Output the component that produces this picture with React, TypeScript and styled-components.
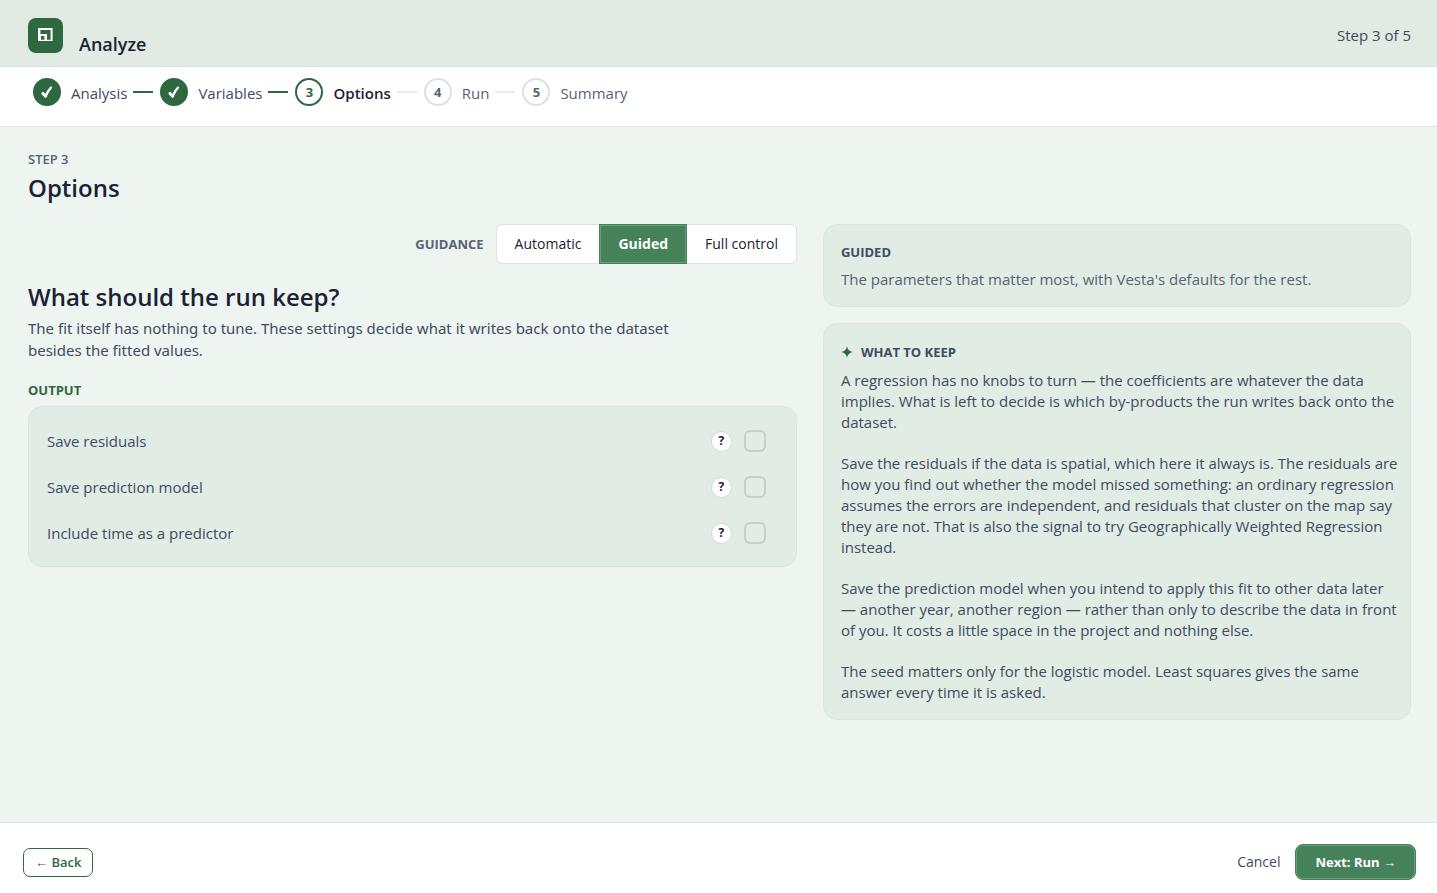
import React, { useState } from 'react';
import styled, { createGlobalStyle, css } from 'styled-components';

const color = {
  page: '#eef4f0',
  panel: '#e1ece4',
  header: '#e1eae3',
  line: '#dce3e0',
  white: '#ffffff',
  ink: '#1a2233',
  text: '#3f4b61',
  muted: '#586373',
  green: '#2f6840',
  action: '#468259',
};

const GlobalStyle = createGlobalStyle`
  *, *::before, *::after { box-sizing: border-box; }
  body {
    margin: 0;
    background: ${color.page};
    color: ${color.text};
    font-family: "Segoe UI", "Open Sans", "Noto Sans", sans-serif;
    font-size: 15px;
    line-height: 20px;
  }
  h1, h2, h3, p, ol { margin: 0; padding: 0; }
  button { font: inherit; cursor: pointer; }
`;

const Page = styled.div`
  min-height: 100vh;
  display: flex;
  flex-direction: column;
`;

const Header = styled.header`
  display: flex;
  justify-content: space-between;
  align-items: center;
  height: 67px;
  padding: 4px 26px 0 28px;
  background: ${color.header};
  border-bottom: 1px solid ${color.line};
`;

const Brand = styled.div`
  display: flex;
  align-items: center;
  gap: 16px;
`;

const Logo = styled.span`
  display: flex;
  align-items: center;
  justify-content: center;
  width: 35px;
  height: 35px;
  border-radius: 8px;
  background: ${color.green};
`;

const AppTitle = styled.h1`
  padding-top: 18px;
  color: ${color.ink};
  font-size: 18px;
  line-height: 24px;
  font-weight: 600;
`;

const StepCount = styled.span`
  font-size: 15px;
`;

const Stepper = styled.nav`
  height: 60px;
  padding: 11px 33px;
  background: ${color.white};
  border-bottom: 1px solid ${color.line};
`;

const StepList = styled.ol`
  display: flex;
  align-items: center;
  list-style: none;
`;

type StepState = 'done' | 'current' | 'todo';

const Step = styled.li<{ $state: StepState }>`
  display: flex;
  align-items: center;
  gap: 10px;
  color: ${(p) => (p.$state === 'current' ? color.ink : p.$state === 'done' ? color.text : color.muted)};
  font-weight: ${(p) => (p.$state === 'current' ? 600 : 400)};

  &:not(:first-child)::before {
    content: '';
    width: 20px;
    height: 2px;
    margin: 0 -3px 0 6px;
    background: ${(p) => (p.$state === 'todo' ? '#e8e9eb' : color.green)};
  }
`;

const StepName = styled.span`
  padding-top: 1px;
`;

const StepDot = styled.span<{ $state: StepState }>`
  display: flex;
  align-items: center;
  justify-content: center;
  width: 28px;
  height: 28px;
  border-radius: 50%;
  border: 2px solid ${(p) => (p.$state === 'todo' ? '#dfe0e4' : color.green)};
  background: ${(p) => (p.$state === 'done' ? color.green : color.white)};
  color: ${(p) => (p.$state === 'todo' ? color.muted : color.green)};
  font-size: 13px;
  font-weight: 700;
`;

const Main = styled.main`
  flex: 1;
  padding: 22px 26px 32px 28px;
`;

const Eyebrow = styled.p`
  color: ${color.muted};
  font-size: 13px;
  line-height: 20px;
  font-weight: 600;
`;

const PageTitle = styled.h2`
  color: ${color.ink};
  font-size: 24px;
  line-height: 34px;
  font-weight: 600;
  margin: 2px 0 19px;
`;

const Columns = styled.div`
  display: grid;
  grid-template-columns: 17fr 13fr;
  gap: 26px;
  align-items: start;
`;

const Guidance = styled.div`
  display: flex;
  justify-content: flex-end;
  align-items: center;
  gap: 12px;
`;

const GuidanceLabel = styled.span`
  color: ${color.muted};
  font-size: 13px;
  font-weight: 700;
`;

const Segments = styled.div`
  display: flex;
  height: 40px;
`;

const Segment = styled.button<{ $active: boolean }>`
  padding: 0 18px;
  border: 1px solid ${color.line};
  background: ${color.white};
  color: ${color.ink};
  font-size: 14px;

  &:first-child { border-radius: 6px 0 0 6px; border-right: 0; }
  &:last-child { border-radius: 0 6px 6px 0; border-left: 0; }

  ${(p) =>
    p.$active &&
    css`
      border-color: ${color.action};
      background: ${color.action};
      box-shadow: inset 0 0 0 1px #6a9c79;
      color: ${color.white};
      font-weight: 700;
    `}
`;

const Question = styled.h3`
  margin-top: 16px;
  color: ${color.ink};
  font-size: 24px;
  line-height: 34px;
  font-weight: 600;
`;

const Lead = styled.p`
  max-width: 680px;
  margin-top: 3px;
  font-family: "Segoe UI", "Noto Sans", sans-serif;
  line-height: 22px;
`;

const GroupLabel = styled.h3`
  margin: 19px 0 6px;
  color: ${color.green};
  font-size: 13px;
  line-height: 20px;
  font-weight: 700;
`;

const Card = styled.section`
  border: 1px solid ${color.line};
  border-radius: 14px;
  background: ${color.panel};
  padding: 17px;
`;

const OptionCard = styled(Card)`
  padding: 11px 30px 10px 18px;
`;

const NoteCard = styled(Card)`
  padding: 18px 10px 16px 17px;
`;

const OptionRow = styled.div`
  display: flex;
  align-items: center;
  height: 46px;
  gap: 12px;
`;

const OptionLabel = styled.label`
  flex: 1;
`;

const Help = styled.button`
  width: 21px;
  height: 21px;
  padding: 0;
  border: 1px solid #d3dbd8;
  border-radius: 50%;
  background: ${color.white};
  color: ${color.ink};
  font-size: 12px;
  line-height: 18px;
  font-weight: 700;
`;

const Checkbox = styled.input`
  appearance: none;
  width: 22px;
  height: 22px;
  margin: 0;
  border: 2px solid #c5d0cb;
  border-radius: 6px;
  cursor: pointer;

  &:checked { background: ${color.green}; border-color: ${color.green}; }
`;

const Aside = styled.aside`
  display: grid;
  gap: 16px;
`;

const CardTitle = styled.h3`
  display: flex;
  align-items: center;
  gap: 8px;
  font-size: 13px;
  line-height: 20px;
  font-weight: 700;
`;

const Hint = styled.p`
  margin-top: 7px;
  color: ${color.muted};
`;

const Notes = styled.div`
  display: grid;
  gap: 20px;
  margin-top: 8px;
  line-height: 21px;
`;

const Footer = styled.footer`
  display: flex;
  justify-content: space-between;
  align-items: center;
  height: 71px;
  padding: 8px 21px 0 23px;
  background: ${color.white};
  border-top: 1px solid ${color.line};
`;

const Actions = styled.div`
  display: flex;
  align-items: center;
  gap: 15px;
`;

const BackButton = styled.button`
  height: 29px;
  padding: 0 11px;
  border: 1px solid ${color.green};
  border-radius: 7px;
  background: ${color.white};
  color: ${color.green};
  font-size: 13px;
  font-weight: 600;
`;

const CancelButton = styled.button`
  padding: 0;
  border: 0;
  background: none;
  color: ${color.text};
  font-size: 14px;
`;

const NextButton = styled.button`
  height: 36px;
  padding: 0 19px;
  border: 1px solid ${color.action};
  border-radius: 8px;
  background: ${color.action};
  box-shadow: inset 0 0 0 1px #6a9c79;
  color: ${color.white};
  font-size: 13px;
  font-weight: 700;
`;

const steps: { name: string; state: StepState }[] = [
  { name: 'Analysis', state: 'done' },
  { name: 'Variables', state: 'done' },
  { name: 'Options', state: 'current' },
  { name: 'Run', state: 'todo' },
  { name: 'Summary', state: 'todo' },
];

const levels = ['Automatic', 'Guided', 'Full control'];

const outputs = [
  { id: 'residuals', label: 'Save residuals' },
  { id: 'model', label: 'Save prediction model' },
  { id: 'time', label: 'Include time as a predictor' },
];

const notes = [
  'A regression has no knobs to turn — the coefficients are whatever the data implies. What is left to decide is which by-products the run writes back onto the dataset.',
  'Save the residuals if the data is spatial, which here it always is. The residuals are how you find out whether the model missed something: an ordinary regression assumes the errors are independent, and residuals that cluster on the map say they are not. That is also the signal to try Geographically Weighted Regression instead.',
  'Save the prediction model when you intend to apply this fit to other data later — another year, another region — rather than only to describe the data in front of you. It costs a little space in the project and nothing else.',
  'The seed matters only for the logistic model. Least squares gives the same answer every time it is asked.',
];

const LogoMark = () => (
  <svg width="15" height="15" viewBox="0 0 15 15" fill="#fff" aria-hidden="true">
    <path d="M0 0H14.6V13H0ZM2.4 2V6H9V11.7H12.6V2ZM3 8V11.7H6.4V8Z" fillRule="evenodd" />
  </svg>
);

const CheckMark = () => (
  <svg width="14" height="14" viewBox="0 0 14 14" fill="none" stroke="#fff" aria-hidden="true">
    <path d="M3 8.4 5.6 11.2" strokeWidth="3" strokeLinecap="round" />
    <path d="M5.6 11.2Q8 6 11 2.6" strokeWidth="2.3" strokeLinecap="round" />
  </svg>
);

const Spark = () => (
  <svg width="12" height="12" viewBox="0 0 12 12" fill={color.green} aria-hidden="true">
    <path d="M6 .5Q7 5 11.5 6 7 7 6 11.5 5 7 .5 6 5 5 6 .5Z" />
  </svg>
);

export default function App() {
  const [level, setLevel] = useState('Guided');

  return (
    <Page>
      <GlobalStyle />
      <Header>
        <Brand>
          <Logo><LogoMark /></Logo>
          <AppTitle>Analyze</AppTitle>
        </Brand>
        <StepCount>Step 3 of 5</StepCount>
      </Header>
      <Stepper aria-label="Progress">
        <StepList>
          {steps.map((s, i) => (
            <Step key={s.name} $state={s.state}>
              <StepDot $state={s.state}>{s.state === 'done' ? <CheckMark /> : i + 1}</StepDot>
              <StepName>{s.name}</StepName>
            </Step>
          ))}
        </StepList>
      </Stepper>
      <Main>
        <Eyebrow>STEP 3</Eyebrow>
        <PageTitle>Options</PageTitle>
        <Columns>
          <div>
            <Guidance>
              <GuidanceLabel id="guidance">GUIDANCE</GuidanceLabel>
              <Segments role="group" aria-labelledby="guidance">
                {levels.map((l) => (
                  <Segment key={l} type="button" $active={l === level} aria-pressed={l === level} onClick={() => setLevel(l)}>
                    {l}
                  </Segment>
                ))}
              </Segments>
            </Guidance>
            <Question>What should the run keep?</Question>
            <Lead>
              The fit itself has nothing to tune. These settings decide what it writes back onto the dataset besides the
              fitted values.
            </Lead>
            <GroupLabel>OUTPUT</GroupLabel>
            <OptionCard>
              {outputs.map((o) => (
                <OptionRow key={o.id}>
                  <OptionLabel htmlFor={o.id}>{o.label}</OptionLabel>
                  <Help type="button" aria-label={`About: ${o.label}`}>?</Help>
                  <Checkbox type="checkbox" id={o.id} />
                </OptionRow>
              ))}
            </OptionCard>
          </div>
          <Aside>
            <Card>
              <CardTitle>GUIDED</CardTitle>
              <Hint>The parameters that matter most, with Vesta's defaults for the rest.</Hint>
            </Card>
            <NoteCard>
              <CardTitle><Spark />WHAT TO KEEP</CardTitle>
              <Notes>
                {notes.map((n) => (
                  <p key={n}>{n}</p>
                ))}
              </Notes>
            </NoteCard>
          </Aside>
        </Columns>
      </Main>
      <Footer>
        <BackButton type="button">← Back</BackButton>
        <Actions>
          <CancelButton type="button">Cancel</CancelButton>
          <NextButton type="button">Next: Run →</NextButton>
        </Actions>
      </Footer>
    </Page>
  );
}
